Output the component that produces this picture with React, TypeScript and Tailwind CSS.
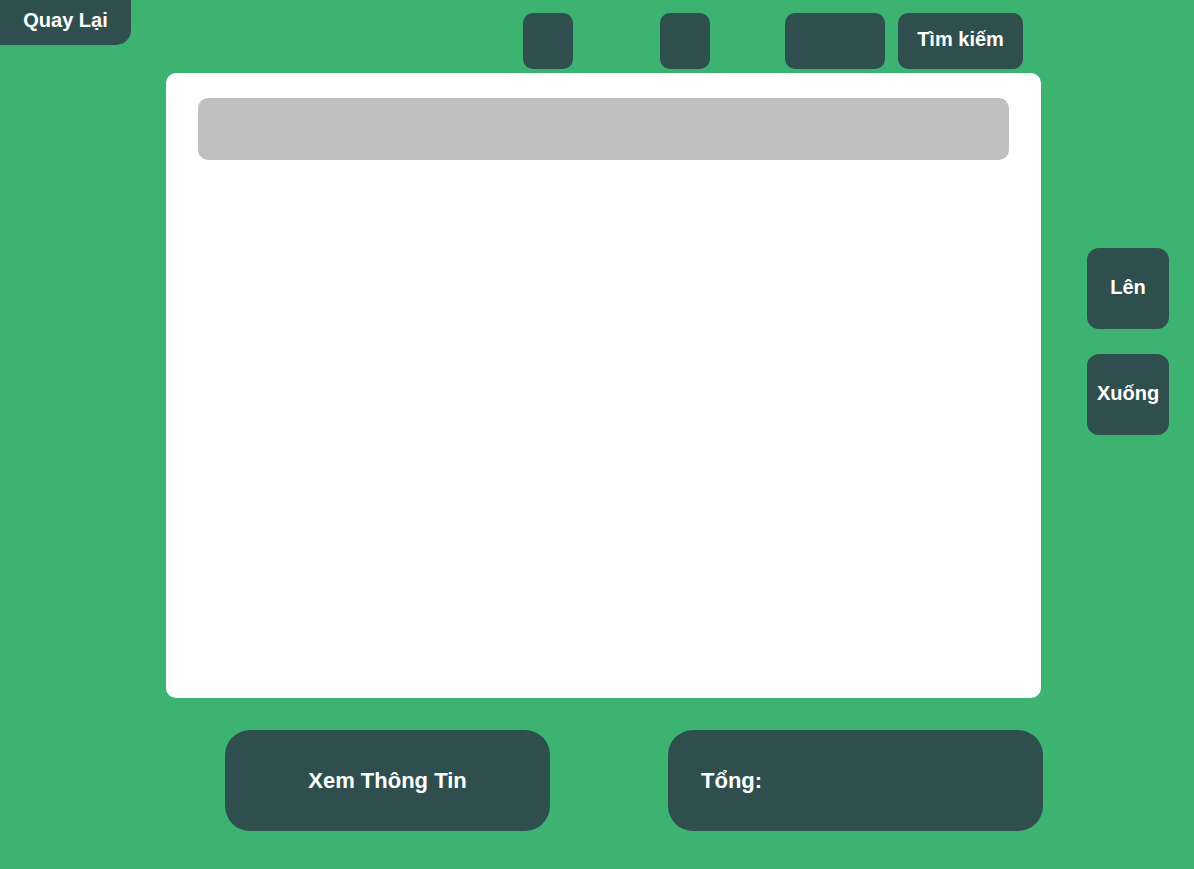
import React from "react";

function App() {
  const dark = "bg-[#2f4f4f] text-white font-bold";

  return (
    <div className="w-full h-[869px] bg-[#3cb371] font-['Liberation_Sans',Arial,sans-serif] overflow-hidden">
      {/* top bar */}
      <div className="flex items-start h-[73px]">
        <button className={`${dark} w-[131px] h-[45px] rounded-br-[15px] text-[20px] flex items-center justify-center pb-[5px]`}>
          Quay Lại
        </button>
        <div className="flex mt-[13px] ml-[392px]">
          <button className={`${dark} w-[50px] h-[56px] rounded-[10px]`}></button>
          <button className={`${dark} w-[50px] h-[56px] rounded-[10px] ml-[87px]`}></button>
          <button className={`${dark} w-[100px] h-[56px] rounded-[10px] ml-[75px]`}></button>
          <button className={`${dark} w-[125px] h-[56px] rounded-[10px] ml-[13px] text-[20px] flex items-center justify-center pb-[4px]`}>
            Tìm kiếm
          </button>
        </div>
      </div>

      {/* main area */}
      <div className="flex items-start">
        <div className="ml-[166px] w-[875px] h-[625px] bg-white rounded-[10px] pt-[25px] px-[32px]">
          <div className="h-[62px] w-full bg-[#c0c0c0] rounded-[10px]"></div>
        </div>
        <div className="flex flex-col gap-[25px] ml-[46px] mt-[175px]">
          <button className={`${dark} w-[82px] h-[81px] rounded-[12px] text-[20px] flex items-center justify-center pb-[3px]`}>
            Lên
          </button>
          <button className={`${dark} w-[82px] h-[81px] rounded-[12px] text-[20px] flex items-center justify-center pb-[3px]`}>
            Xuống
          </button>
        </div>
      </div>

      {/* bottom */}
      <div className="flex mt-[32px]">
        <button className={`${dark} ml-[225px] w-[325px] h-[101px] rounded-[25px] text-[22px] flex items-center justify-center`}>
          Xem Thông Tin
        </button>
        <div className={`${dark} ml-[118px] w-[375px] h-[101px] rounded-[25px] text-[22px] flex items-center pl-[33px]`}>
          Tổng:
        </div>
      </div>
    </div>
  );
}

export default App;
